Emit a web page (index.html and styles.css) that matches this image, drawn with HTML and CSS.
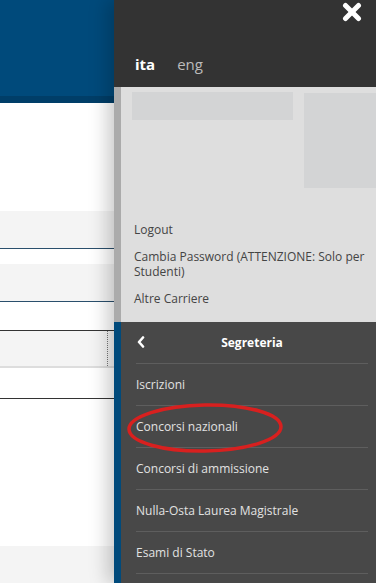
FILE: index.html
```html
<!DOCTYPE html>
<html lang="it">
  <head>
    <meta charset="UTF-8" />
    <title>Segreteria - Menu</title>
    <link rel="stylesheet" href="styles.css">
  </head>
  <body>
    <!-- Pagina sotto il menu -->
    <div class="page">
      <div class="page-header"></div>
      <div class="page-rows">
        <div class="row row-grey row-blue-line"></div>
        <div class="row row-grey row-blue-line"></div>
        <div class="row row-grey row-table"></div>
        <div class="row row-white-line"></div>
      </div>
      <div class="page-footer"></div>
    </div>

    <!-- Menu laterale -->
    <aside class="panel">
      <div class="panel-top">
        <button class="close-btn" aria-label="Chiudi">
          <svg viewBox="0 0 20 20">
            <line x1="3.5" y1="3.5" x2="16.5" y2="16.5" />
            <line x1="16.5" y1="3.5" x2="3.5" y2="16.5" />
          </svg>
        </button>
        <div class="langs">
          <a href="#" class="active">ita</a>
          <a href="#">eng</a>
        </div>
      </div>

      <div class="panel-user">
        <div class="user-info">
          <div class="user-name"></div>
          <div class="user-photo"></div>
        </div>
        <ul class="user-links">
          <li><a href="#">Logout</a></li>
          <li><a href="#">Cambia Password (ATTENZIONE: Solo per Studenti)</a></li>
          <li><a href="#">Altre Carriere</a></li>
        </ul>
      </div>

      <div class="panel-menu">
        <ul class="menu">
          <li class="menu-head">
            <span class="back">
              <svg viewBox="0 0 8 12"><polyline points="6,1.5 2,6 6,10.5" /></svg>
            </span>
            Segreteria
          </li>
          <li><a href="#">Iscrizioni</a></li>
          <li><a href="#">Concorsi nazionali</a></li>
          <li><a href="#">Concorsi di ammissione</a></li>
          <li><a href="#">Nulla-Osta Laurea Magistrale</a></li>
          <li><a href="#">Esami di Stato</a></li>
        </ul>
        <!-- cerchio rosso di evidenziazione -->
        <svg class="highlight" viewBox="0 0 160 52">
          <ellipse cx="80" cy="26" rx="76" ry="23" transform="rotate(-1 80 26)" />
        </svg>
      </div>
    </aside>
  </body>
</html>
```

FILE: styles.css
```css
html, body {
  margin: 0;
  height: 100%;
}

body {
  display: flex;
  overflow: hidden;
  font-family: "Open Sans", "Noto Sans", sans-serif;
  background: #ffffff;
}

/* Pagina */
.page {
  flex: 1;
  display: flex;
  flex-direction: column;
}

.page-header {
  height: 96px;
  background-color: #004a7b;
  border-bottom: 7px solid #003e68;
}

.page-rows {
  padding-top: 108px;
  flex: 1;
}

.row {
  height: 37px;
}

.row-grey {
  background-color: #f4f4f4;
}

.row-blue-line {
  border-bottom: 1px solid #2a4f6c;
  margin-bottom: 15px;
}

.row-blue-line + .row-blue-line {
  margin-bottom: 28px;
}

.row-table {
  height: 35px;
  border-top: 1px solid #333333;
  border-bottom: 2px solid #dddddd;
  position: relative;
}

.row-table::after {
  content: "";
  position: absolute;
  top: 0;
  bottom: 0;
  right: 6px;
  border-right: 1px dotted #777777;
}

.row-white-line {
  height: 30px;
  background-color: #ffffff;
  border-bottom: 1px solid #333333;
}

.page-footer {
  height: 37px;
  background-color: #f4f4f4;
}

/* Menu laterale */
.panel {
  width: 262px;
  flex-shrink: 0;
  display: flex;
  flex-direction: column;
  overflow: hidden;
  box-shadow: -6px 0 18px rgba(0, 0, 0, 0.22);
  position: relative;
}

.panel-top {
  height: 87px;
  background-color: #333333;
  display: flex;
  flex-direction: column;
  box-sizing: border-box;
  padding: 2px 14px 0 21px;
}

.close-btn {
  align-self: flex-end;
  background: none;
  border: none;
  padding: 0;
  width: 20px;
  height: 20px;
  cursor: pointer;
}

.close-btn svg {
  width: 20px;
  height: 20px;
  display: block;
}

.close-btn line {
  stroke: #ffffff;
  stroke-width: 5;
  stroke-linecap: round;
}

.langs {
  margin-top: 32px;
  display: flex;
  gap: 22px;
}

.langs a {
  color: #bbbbbb;
  text-decoration: none;
  font-size: 15px;
  line-height: 20px;
}

.langs a.active {
  color: #ffffff;
  font-weight: 700;
}

.panel-user {
  height: 235px;
  box-sizing: border-box;
  background-color: #dedede;
  border-left: 7px solid #ababab;
  padding: 5px 0 0 11px;
}

.user-info {
  display: flex;
  gap: 11px;
  align-items: flex-start;
}

.user-name {
  width: 161px;
  height: 28px;
  flex-shrink: 0;
  background-color: #d3d4d5;
}

.user-photo {
  width: 80px;
  height: 95px;
  margin-top: 1px;
  flex-shrink: 0;
  background-color: #d3d4d5;
}

.user-links {
  list-style: none;
  margin: 34px 0 0;
  padding: 0 10px 0 2px;
  display: flex;
  flex-direction: column;
  gap: 12px;
}

.user-links li {
  font-size: 12px;
  line-height: 15px;
}

.user-links a {
  color: #444444;
  text-decoration: none;
}

.panel-menu {
  flex: 1;
  background-color: #484848;
  border-left: 7px solid #004a7b;
  position: relative;
}

.menu {
  list-style: none;
  margin: 0 8px 0 15px;
  padding: 0;
}

.menu li {
  height: 41px;
  border-bottom: 1px solid #5e5e5e;
  display: flex;
  align-items: center;
  font-size: 12px;
}

.menu li a {
  color: #e2e2e2;
  text-decoration: none;
}

.menu .menu-head {
  justify-content: center;
  color: #ffffff;
  font-weight: 700;
  position: relative;
}

.back {
  position: absolute;
  left: 1px;
  top: 14px;
  width: 8px;
  height: 12px;
}

.back svg {
  display: block;
  width: 8px;
  height: 12px;
}

.back polyline {
  fill: none;
  stroke: #ffffff;
  stroke-width: 2.6;
  stroke-linecap: round;
  stroke-linejoin: round;
}

.highlight {
  position: absolute;
  left: 4px;
  top: 80px;
  width: 160px;
  height: 52px;
  overflow: visible;
}

.highlight ellipse {
  fill: none;
  stroke: #d8201f;
  stroke-width: 3.5;
}
```
